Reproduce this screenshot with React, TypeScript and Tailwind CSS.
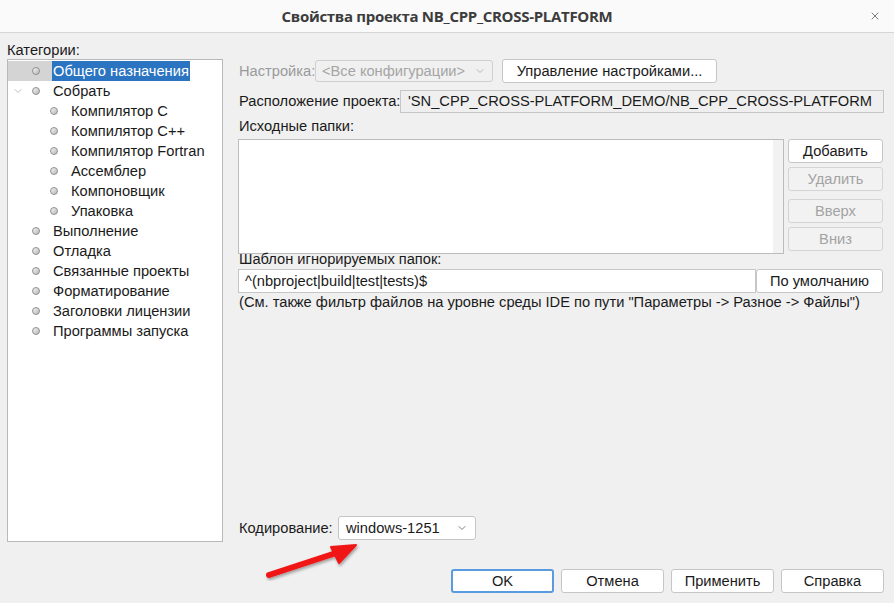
import React from 'react';
import { ChevronDown, X } from 'lucide-react';

interface TreeItem {
  label: string;
  level: number;
  expander?: boolean;
  selected?: boolean;
}

const items: TreeItem[] = [
  { label: 'Общего назначения', level: 0, selected: true },
  { label: 'Собрать', level: 0, expander: true },
  { label: 'Компилятор C', level: 1 },
  { label: 'Компилятор C++', level: 1 },
  { label: 'Компилятор Fortran', level: 1 },
  { label: 'Ассемблер', level: 1 },
  { label: 'Компоновщик', level: 1 },
  { label: 'Упаковка', level: 1 },
  { label: 'Выполнение', level: 0 },
  { label: 'Отладка', level: 0 },
  { label: 'Связанные проекты', level: 0 },
  { label: 'Форматирование', level: 0 },
  { label: 'Заголовки лицензии', level: 0 },
  { label: 'Программы запуска', level: 0 },
];

const Bullet = () => (
  <span className="block w-[8px] h-[8px] rounded-full bg-gradient-to-br from-[#f4f4f4] to-[#b8b8b8] border border-[#8f8f8f]" />
);

const Btn = ({ children, disabled, className = '' }: { children: React.ReactNode; disabled?: boolean; className?: string }) => (
  <div
    className={`flex items-center justify-center h-[24px] rounded-[3px] border ${
      disabled ? 'bg-[#f2f2f2] border-[#d4d4d4] text-[#a3a3a3]' : 'bg-white border-[#c6c6c6] text-[#1a1a1a]'
    } ${className}`}
  >
    {children}
  </div>
);

export default function App() {
  return (
    <div className="relative w-[894px] h-[603px] overflow-hidden bg-[#f0f0f0] text-[14.67px] leading-[16px] text-[#1a1a1a] font-['Liberation_Sans',Arial,sans-serif]">
      {/* Title bar */}
      <div className="relative h-[33px] bg-[#fafafa] border-b border-[#d6d6d6] flex items-center justify-center">
        <span className="font-['Open_Sans',sans-serif] font-bold text-[15px] text-[#3c3c3c] tracking-[-0.3px]">
          Свойства проекта NB_CPP_CROSS-PLATFORM
        </span>
        <X className="absolute right-[13px] top-[10px] text-[#555]" size={12} strokeWidth={1.5} />
      </div>

      <div className="flex pl-[7px] pr-[10px] pt-[8px]">
        {/* Categories */}
        <div className="w-[216px] flex flex-col">
          <div className="h-[18px] leading-[18px]">Категории:</div>
          <div className="h-[483px] bg-white border border-[#b9b9b9] pt-[1px]">
            {items.map((it) => (
              <div key={it.label} className="flex items-center h-[20px]">
                <div className={`flex items-center h-full ${it.selected ? 'bg-[#d4d4d4]' : ''} ${it.level === 0 ? 'w-[44px]' : 'w-[62px]'}`}>
                  <div className="w-[16px] flex justify-end">
                    {it.expander && <ChevronDown size={12} strokeWidth={1.5} className="text-[#a8a8a8]" />}
                  </div>
                  <div className={it.level === 0 ? 'ml-[8px]' : 'ml-[26px]'}>
                    <Bullet />
                  </div>
                </div>
                <span className={`h-full flex items-center px-[1px] ${it.selected ? 'bg-[#2b74c1] text-white' : ''}`}>
                  {it.label}
                </span>
              </div>
            ))}
          </div>
        </div>

        {/* General panel */}
        <div className="ml-[15px] flex-1 flex flex-col h-[500px]">
          <div className="flex items-center h-[24px] mt-[18px]">
            <span className="text-[#9a9a9a] w-[77px] pl-[1px] whitespace-nowrap">Настройка:</span>
            <div className="flex items-center justify-between w-[178px] h-[22px] border border-[#cfcfcf] rounded-[3px] bg-[#f0f0f0] text-[#a5a5a5] pl-[6px] pr-[6px]">
              <span className="whitespace-nowrap">&lt;Все конфигурации&gt;</span>
              <ChevronDown size={12} strokeWidth={1.5} className="text-[#a5a5a5]" />
            </div>
            <Btn className="ml-[9px] w-[215px]">Управление настройками...</Btn>
          </div>

          <div className="flex items-center h-[24px] mt-[6px]">
            <span className="w-[162px] pl-[1px] whitespace-nowrap">Расположение проекта:</span>
            <div className="flex-1 h-[23px] border border-[#c6c6c6] bg-[#efefef] flex items-center pl-[7px] overflow-hidden whitespace-nowrap">
              'SN_CPP_CROSS-PLATFORM_DEMO/NB_CPP_CROSS-PLATFORM
            </div>
          </div>

          <div className="mt-[4px] h-[18px] leading-[18px] pl-[1px]">Исходные папки:</div>

          <div className="flex mt-[4px]">
            <div className="w-[546px] h-[115px] bg-white border border-[#bcbcbc] flex justify-end">
              <div className="w-[10px] h-full bg-[#f2f2f2]" />
            </div>
            <div className="ml-[4px] w-[95px] flex flex-col">
              <Btn className="h-[24px]">Добавить</Btn>
              <Btn disabled className="mt-[4px]">Удалить</Btn>
              <Btn disabled className="mt-[8px]">Вверх</Btn>
              <Btn disabled className="mt-[4px]">Вниз</Btn>
            </div>
          </div>

          <div className="h-[16px] leading-[16px] pl-[1px] mt-[-3px]">Шаблон игнорируемых папок:</div>

          <div className="flex mt-[2px]">
            <div className="w-[518px] h-[24px] bg-white border border-[#c6c6c6] flex items-center pl-[6px]">
              ^(nbproject|build|test|tests)$
            </div>
            <Btn className="w-[127px]">По умолчанию</Btn>
          </div>

          <div className="h-[18px] leading-[18px] pl-[1px] whitespace-nowrap">
            (См. также фильтр файлов на уровне среды IDE по пути "Параметры -&gt; Разное -&gt; Файлы")
          </div>

          <div className="flex-1" />

          <div className="flex items-center h-[24px] mb-[1px]">
            <span className="w-[100px] pl-[1px] whitespace-nowrap">Кодирование:</span>
            <div className="flex items-center justify-between w-[138px] h-[24px] border border-[#c6c6c6] rounded-[3px] bg-white pl-[7px] pr-[7px]">
              <span>windows-1251</span>
              <ChevronDown size={12} strokeWidth={1.5} className="text-[#555]" />
            </div>
          </div>
        </div>
      </div>

      {/* Footer buttons */}
      <div className="flex justify-end gap-[7px] pr-[10px] mt-[27px]">
        <div className="w-[103px] h-[24px] rounded-[3px] bg-white border-2 border-[#5a9be0] flex items-center justify-center">
          OK
        </div>
        <Btn className="w-[103px]">Отмена</Btn>
        <Btn className="w-[103px]">Применить</Btn>
        <Btn className="w-[103px]">Справка</Btn>
      </div>

      {/* Red annotation arrow */}
      <svg className="absolute left-0 top-0 pointer-events-none" width="894" height="603">
        <defs>
          <filter id="sh" x="-20%" y="-20%" width="140%" height="140%">
            <feDropShadow dx="1" dy="2" stdDeviation="1.5" floodColor="#000" floodOpacity="0.35" />
          </filter>
        </defs>
        <g filter="url(#sh)">
          <line x1="269" y1="575" x2="336" y2="553" stroke="#f01818" strokeWidth="6" strokeLinecap="round" />
          <polygon points="356,545 331,547 339,563" fill="#f01818" stroke="#f01818" strokeWidth="2" strokeLinejoin="round" />
        </g>
      </svg>
    </div>
  );
}
